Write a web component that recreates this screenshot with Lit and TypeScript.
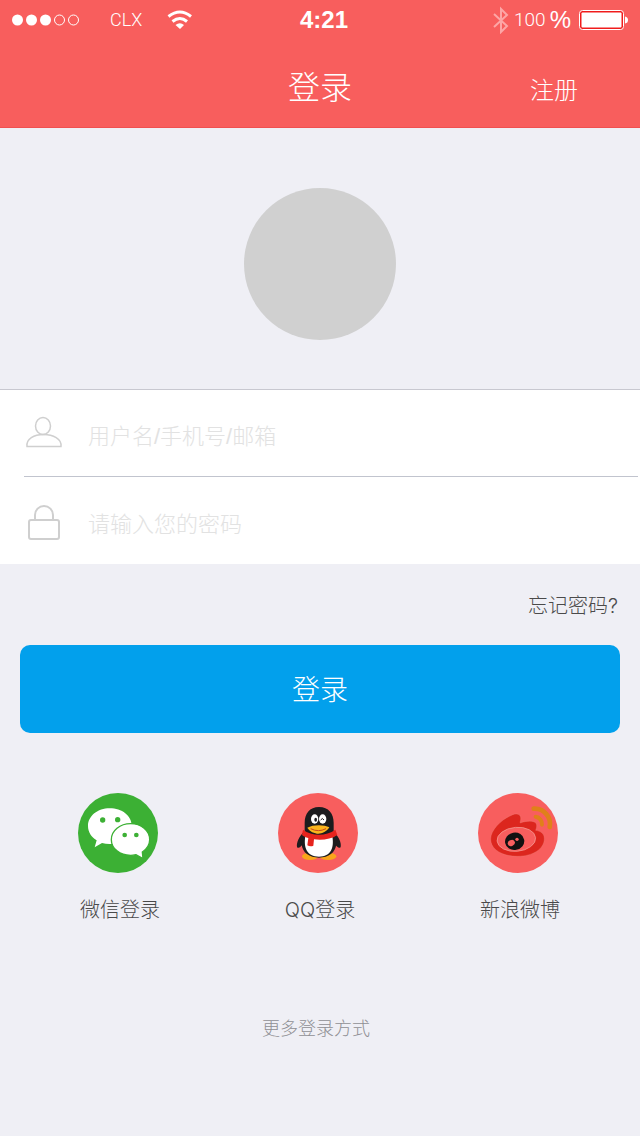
import { LitElement, html, css, svg } from 'lit';
import { customElement, state } from 'lit/decorators.js';

const wechatIcon = svg`
  <circle cx="144" cy="144" r="120" fill="#3cb034"/>
  <path fill="#fff" d="M119 70c37 0 66 22 66 52s-29 55-66 55c-8 0-16-1-23-3L74 187l6-21c-16-10-26-25-26-43 0-30 29-53 65-53z"/>
  <circle cx="98" cy="105" r="8" fill="#3cb034"/>
  <circle cx="143" cy="104" r="8" fill="#3cb034"/>
  <path fill="#fff" stroke="#3cb034" stroke-width="4" d="M182 116c32 0 57 21 57 48 0 15-9 28-22 37l2 20-21-12c-5 1-11 2-16 2-32 0-58-20-58-47s26-48 58-48z"/>
  <circle cx="164" cy="150" r="7" fill="#3cb034"/>
  <circle cx="199" cy="150" r="7" fill="#3cb034"/>`;

const qqIcon = svg`
  <circle cx="144" cy="144" r="120" fill="#f85e5e"/>
  <ellipse cx="120" cy="214" rx="24" ry="11" fill="#f9a51b"/>
  <ellipse cx="174" cy="214" rx="25" ry="11" fill="#f9a51b"/>
  <path fill="#1c1c1e" d="M102 140c-15 14-23 32-21 46 4 7 13-2 18-10zM191 140c15 14 24 32 21 46-4 7-13-2-18-10z"/>
  <path fill="#1c1c1e" d="M147 66c29 0 44 20 44 47v27c8 14 9 26 8 38-3 25-23 40-52 40s-50-15-52-40c-1-12 1-24 9-38v-27c0-27 15-47 43-47z"/>
  <path fill="#fff" d="M106 154c20 9 61 9 81 0 6 34-4 61-40 61s-47-27-41-61z"/>
  <ellipse cx="134" cy="102" rx="11" ry="14" fill="#fff"/>
  <ellipse cx="158" cy="102" rx="11" ry="14" fill="#fff"/>
  <ellipse cx="137" cy="104" rx="4" ry="6" fill="#1c1c1e"/>
  <path d="M152 105q5-9 10 0" fill="none" stroke="#1c1c1e" stroke-width="3"/>
  <path fill="#fbb51d" d="M112 128c16-9 50-10 66-1-7 12-22 19-33 19s-27-7-33-18z"/>
  <path d="M122 131q23 12 46 0" fill="none" stroke="#c9471b" stroke-width="3"/>
  <path fill="#e6231d" d="M99 134c27 20 69 20 97 0l6 16c-18 13-46 16-70 13l-2 19c-6 3-13 2-18-1l3-22c-8-2-14-5-19-9z"/>`;

const weiboIcon = svg`
  <circle cx="144" cy="144" r="120" fill="#f85e5e"/>
  <path fill="#dc261e" stroke="#ee8a80" stroke-width="1" d="M122 92c17-10 33-5 30 12-1 5-2 8-1 10 12-5 32-8 42-3 8 4 9 12 4 25 14 2 26 9 26 25 0 31-35 53-80 53-46 0-81-20-81-52 0-26 30-57 60-70z"/>
  <ellipse cx="139" cy="163" rx="58" ry="36" transform="rotate(-5 139 163)" fill="#f85e5e" stroke="#f3a49c" stroke-width="2"/>
  <ellipse cx="134" cy="169" rx="29" ry="26" transform="rotate(-10 134 169)" fill="#111"/>
  <ellipse cx="124" cy="174" rx="11" ry="9" transform="rotate(-25 124 174)" fill="#f85e5e"/>
  <circle cx="141" cy="163" r="5" fill="#f85e5e"/>
  <g fill="none" stroke="#e0801a" stroke-linecap="round">
    <path stroke-width="12" d="M197 95A22 22 0 0 1 216 119"/>
    <path stroke-width="14" d="M191 71A46 46 0 0 1 239 126"/>
  </g>`;

const providers = [
  { name: '微信登录', icon: wechatIcon },
  { name: 'QQ登录', icon: qqIcon },
  { name: '新浪微博', icon: weiboIcon },
];

@customElement('app-root')
export class AppRoot extends LitElement {
  @state() private account = '';
  @state() private password = '';

  static styles = css`
    :host {
      display: block;
      min-height: 100vh;
      background: #efeff5;
      color: #4a4a4a;
      font-family: Inter, 'Noto Sans CJK SC', sans-serif;
      font-weight: 300;
    }
    * { box-sizing: border-box; }
    svg { display: block; }
    a { color: inherit; text-decoration: none; }
    button {
      border: 0;
      padding: 0;
      background: none;
      color: inherit;
      font: inherit;
      cursor: pointer;
    }
    .top { background: #f85e5d; color: #fff; border-bottom: 1px solid #f05050; }
    .status {
      display: grid;
      grid-template-columns: 1fr auto 1fr;
      align-items: center;
      height: 40px;
      padding: 0 12px;
    }
    .left, .right { display: flex; align-items: center; }
    .right { justify-content: flex-end; gap: 4px; }
    .carrier { font: 300 18px/24px Roboto, sans-serif; margin: 0 24px 0 30px; }
    .time { font: 700 24px/40px 'Liberation Sans', sans-serif; padding-left: 8px; }
    .percent { font: 300 19px/24px Roboto, sans-serif; }
    .sign { font: 400 24px/24px 'Liberation Sans', sans-serif; margin-right: 4px; }
    .nav {
      display: grid;
      grid-template-columns: 1fr auto 1fr;
      align-items: center;
      height: 87px;
      padding: 8px 62px 0;
    }
    .title { grid-column: 2; margin: 0; font-size: 32px; line-height: 48px; font-weight: 300; }
    .register { justify-self: end; font-size: 24px; line-height: 36px; padding-top: 6px; }
    .avatar-area { display: flex; justify-content: center; padding: 60px 0 49px; }
    .avatar { width: 152px; height: 152px; border-radius: 50%; background: #d0d0d0; }
    .fields { background: #fff; border-top: 1px solid #c8c8d0; }
    .field { display: flex; align-items: center; height: 87px; padding-left: 24px; }
    .field:first-child { height: 86px; }
    .divider { height: 1px; margin: 0 2px 0 24px; background: #c1c4ce; }
    .field svg { width: 40px; height: 40px; margin-right: 24px; flex: none; }
    .field input {
      flex: 1;
      min-width: 0;
      height: 80px;
      padding: 8px 0 0;
      border: 0;
      outline: 0;
      background: none;
      color: #4a4a4a;
      font: 300 22px/32px 'Liberation Sans', 'Noto Sans CJK SC', sans-serif;
    }
    .field input::placeholder { color: #e2e2e2; opacity: 1; }
    .forgot-row { display: flex; justify-content: flex-end; padding: 27px 22px 24px; }
    .forgot { font-size: 20px; line-height: 30px; }
    .submit {
      display: block;
      width: calc(100% - 40px);
      height: 88px;
      margin: 0 20px 60px;
      padding-bottom: 2px;
      border-radius: 10px;
      background: #02a0ec;
      color: #fff;
      font-size: 28px;
    }
    .providers {
      display: grid;
      grid-template-columns: repeat(3, 1fr);
      padding: 0 22px 0 18px;
    }
    .provider {
      display: flex;
      flex-direction: column;
      align-items: center;
      gap: 22px;
      font-size: 20px;
      line-height: 30px;
    }
    .provider svg { width: 80px; height: 80px; }
    .provider span { padding-left: 4px; }
    .more {
      display: block;
      margin: 90px auto 0;
      padding-right: 8px;
      color: #909094;
      font-size: 18px;
      line-height: 28px;
    }
  `;

  render() {
    return html`
      <header class="top">
        <div class="status">
          <div class="left">
            <svg width="68" height="12" viewBox="0 0 68 12" fill="#fff">
              <circle cx="5.5" cy="6" r="5.5"/><circle cx="19.5" cy="6" r="5.5"/><circle cx="33.5" cy="6" r="5.5"/>
              <g fill="none" stroke="#fff"><circle cx="47.5" cy="6" r="5"/><circle cx="61.5" cy="6" r="5"/></g>
            </svg>
            <span class="carrier">CLX</span>
            <svg width="26" height="20" viewBox="0 0 26 20" fill="none" stroke="#fff" stroke-width="3">
              <path d="M2.500 6.500Q14-2.500 25 6.500"/><path d="M6.500 11.500Q14 5.500 21 11.500"/>
              <path d="M9.500 15Q14 11.500 18 15L14 19Z" fill="#fff" stroke="none"/>
            </svg>
          </div>
          <div class="time">4:21</div>
          <div class="right">
            <svg width="18" height="28" viewBox="0 0 18 28" fill="none" stroke="#fda6a6" stroke-width="2">
              <path d="M2 8L15 20L9 26V3L15 9L2 21"/>
            </svg>
            <span class="percent">100</span><span class="sign">%</span>
            <svg width="49" height="20" viewBox="0 0 49 20">
              <rect x=".5" y=".5" width="44" height="19" rx="3" fill="#f01c1c" stroke="#fff"/>
              <rect x="2.500" y="2.500" width="40" height="15" rx="1" fill="#fff"/>
              <path d="M46 6.500Q49 7 49 10T46 13.500Z" fill="#fff"/>
            </svg>
          </div>
        </div>
        <nav class="nav">
          <h1 class="title">登录</h1>
          <a class="register" href="#register">注册</a>
        </nav>
      </header>

      <main>
        <div class="avatar-area"><div class="avatar"></div></div>
        <form @submit=${(e: Event) => e.preventDefault()}>
          <div class="fields">
            <label class="field">
              <svg viewBox="0 0 40 40" fill="none" stroke="#cfcfcf" stroke-width="1.500">
                <ellipse cx="19" cy="13" rx="7.500" ry="8.500"/>
                <path d="M3 33.500C2 26 10 21.500 19.500 21.500S38 26 37 33.500Z"/>
              </svg>
              <input type="text" placeholder="用户名/手机号/邮箱" .value=${this.account}
                @input=${(e: Event) => (this.account = (e.target as HTMLInputElement).value)}>
            </label>
            <div class="divider"></div>
            <label class="field">
              <svg viewBox="0 0 40 40" fill="none" stroke="#cfcfcf" stroke-width="2">
                <rect x="5" y="19" width="30" height="19" rx="2"/>
                <path d="M11 19V14A9 9 0 0 1 29 14V19"/>
              </svg>
              <input type="password" placeholder="请输入您的密码" .value=${this.password}
                @input=${(e: Event) => (this.password = (e.target as HTMLInputElement).value)}>
            </label>
          </div>
          <div class="forgot-row"><a class="forgot" href="#forgot">忘记密码?</a></div>
          <button class="submit" type="submit">登录</button>
        </form>
        <div class="providers">
          ${providers.map((p) => html`
            <button class="provider" type="button">
              <svg viewBox="24 24 240 240">${p.icon}</svg>
              <span>${p.name}</span>
            </button>`)}
        </div>
        <button class="more" type="button">更多登录方式</button>
      </main>
    `;
  }
}
